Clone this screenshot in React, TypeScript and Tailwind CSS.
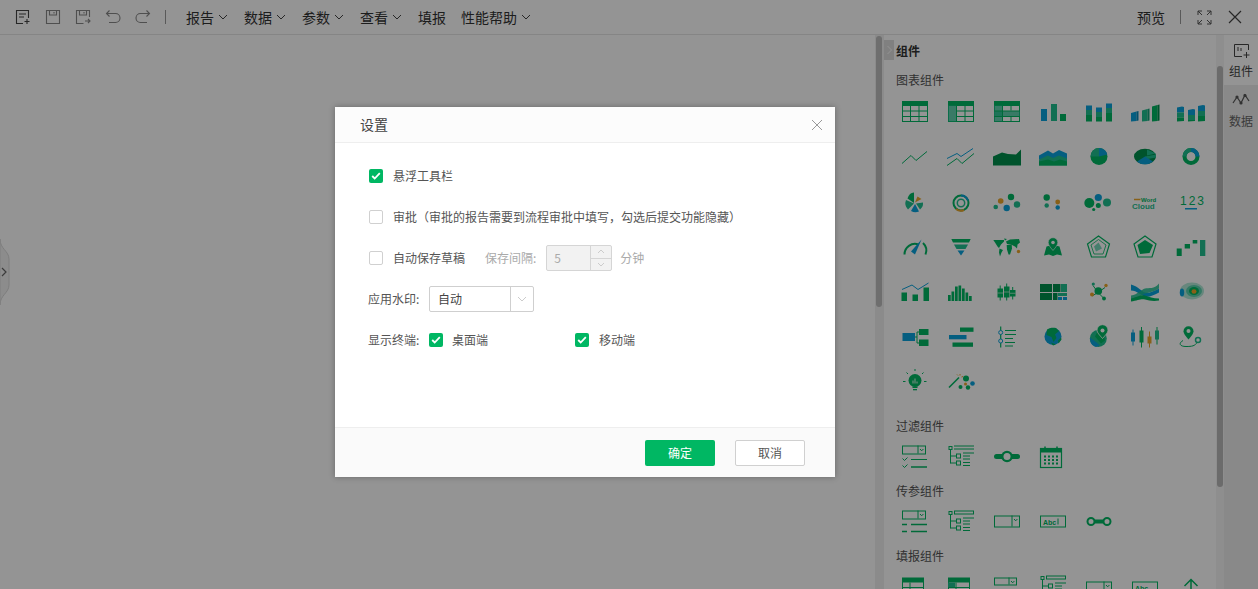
import React from "react";

const G = "#00b763";
const T = "#1fc08f";
const B = "#0aa3dc";
const O = "#eaa52a";
const D = "#008f4c";

const I = ({ children }: { children?: React.ReactNode }) => (
  <svg width={46} height={45} viewBox="0 0.5 46 45" className="block">
    {children}
  </svg>
);

const TableBase = ({ children }: { children?: React.ReactNode }) => (
  <>
    <rect x="10.5" y="12" width="25" height="20" fill="none" stroke={G} />
    <rect x="10" y="11.5" width="26" height="5" fill={G} />
    {children}
  </>
);

const Bar3D = ({ x, top, c, d }: { x: number; top: number; c: string; d: string }) => (
  <>
    <polygon points={`${x},${top + 1.5} ${x + 5.5},${top} ${x + 5.5},31.5 ${x},32`} fill={c} />
    <polygon points={`${x + 5.5},${top} ${x + 7.5},${top - 0.5} ${x + 7.5},31 ${x + 5.5},31.5`} fill={d} />
  </>
);

const Dropdown = ({ x = 10, y = 12, w = 23, h = 8 }: { x?: number; y?: number; w?: number; h?: number }) => (
  <>
    <rect x={x + 0.5} y={y + 0.5} width={w} height={h} fill="none" stroke={G} />
    <line x1={x + w - 7} x2={x + w - 7} y1={y} y2={y + h} stroke={G} />
    <path d={`M${x + w - 5} ${y + 3.5}l1.700 1.800 1.700-1.800`} fill="none" stroke={G} />
  </>
);

const Tree = ({ top }: { top?: boolean }) => (
  <>
    <rect x="11" y="13" width="3" height="3" fill="none" stroke={G} />
    <path d="M12.500 16v14M12.500 22.500h6M12.500 29.500h6" stroke={G} fill="none" />
    <rect x="18.500" y="20.500" width="4" height="4" fill="none" stroke={G} />
    <rect x="18.500" y="27.500" width="4" height="4" fill="none" stroke={G} />
    {top ? (
      <rect x="16.500" y="12.500" width="19" height="3" fill="none" stroke={G} />
    ) : (
      <path d="M16 12.500h20M16 15.500h20" stroke={G} fill="none" />
    )}
    <path d="M25 19.500h11M25 22.500h7M25 25.500h7M25 29h7M25 32h7" stroke={G} fill="none" />
  </>
);

const chart: React.ReactNode[] = [
  <TableBase>
    <path d="M10 21.500h26M10 27h26M18.500 16v16M27 16v16" stroke={G} fill="none" />
  </TableBase>,
  <TableBase>
    <rect x="10" y="16" width="8.500" height="16" fill={T} opacity="0.7" />
    <path d="M18.500 21.500h17.500M18.500 27h17.500M18.500 16v16M27 16v16" stroke={G} fill="none" />
  </TableBase>,
  <TableBase>
    <rect x="10" y="21.500" width="26" height="5.500" fill={T} opacity="0.7" />
    <rect x="10" y="16" width="8.500" height="16" fill={T} opacity="0.7" />
    <path d="M10 21.500h26M10 27h26M18.500 16v16M27 16v5M27 27v5" stroke={G} fill="none" />
  </TableBase>,
  <>
    <rect x="11" y="19.500" width="6" height="12" fill={B} />
    <rect x="21" y="14.500" width="6" height="17" fill={T} />
    <rect x="30" y="24.500" width="6" height="7" fill={G} />
  </>,
  <>
    {[
      [10, 16],
      [20, 18],
      [30, 14],
    ].map(([x, y]) => (
      <g key={x}>
        <rect x={x} y={y} width="6" height="4.500" fill={B} />
        <rect x={x} y={y + 4.500} width="6" height="5" fill={T} />
        <rect x={x} y={y + 9.500} width="6" height={22.500 - y} fill={G} />
      </g>
    ))}
  </>,
  <>
    <Bar3D x={9} top={22} c={B} d="#0889b8" />
    <Bar3D x={20} top={19.500} c={T} d="#14a379" />
    <Bar3D x={30} top={15.500} c={G} d={D} />
  </>,
  <>
    {[
      [9, 17],
      [20, 19.500],
      [30, 15.500],
    ].map(([x, y]) => (
      <g key={x}>
        <polygon points={`${x},${y + 1} ${x + 5},${y} ${x + 7},${y + 0.5} ${x + 7},${y + 6} ${x},${y + 6}`} fill={B} />
        <rect x={x} y={y + 6} width="7" height="5" fill={T} />
        <polygon points={`${x},${y + 11} ${x + 7},${y + 11} ${x + 7},31.500 ${x},32`} fill={G} />
      </g>
    ))}
  </>,

  <polyline points="10,29 19,21 24,26 35,17" fill="none" stroke={G} />,
  <>
    <polyline points="9,24 19,19 23,22 35,14" fill="none" stroke={B} />
    <polyline points="9,31 19,24 24,29 36,19" fill="none" stroke={G} />
  </>,
  <polygon points="9,22 18,18 24,19.500 32,20 37,15 37,31 9,31" fill={D} />,
  <>
    <polygon points="9,21 18,16 23,19 29,15.500 37,19 37,25 9,25" fill={B} />
    <polygon points="9,25 18,21 23,23.500 29,21 37,24 37,31 9,31" fill={T} />
    <polygon points="9,27 18,25 24,27 30,25 37,27 37,31 9,31" fill={G} />
  </>,
  <>
    <circle cx="23" cy="22" r="8.500" fill={G} />
    <path d="M23 22L14.500 22A8.500 8.500 0 0 1 23 13.500z" fill={T} />
    <path d="M23 22V13.500A8.500 8.500 0 0 1 31.300 20z" fill={B} />
  </>,
  <>
    <ellipse cx="23" cy="22" rx="11" ry="7.800" fill={D} />
    <path d="M23 22l11-2v3l-11 2z" fill={T} />
    <path d="M15 27l8-5 8 5c-3 2-5 2.800-8 2.800s-6-.8-8-2.800z" fill={B} />
    <path d="M25 15l9 4-9 2z" fill={T} />
  </>,
  <>
    <circle cx="23" cy="22" r="6.500" fill="none" stroke={G} strokeWidth="4" />
    <path d="M23 15.500a6.500 6.500 0 0 1 6.500 6.500" fill="none" stroke={B} strokeWidth="4" />
    <path d="M16.500 22a6.500 6.500 0 0 1 6.500-6.500" fill="none" stroke={T} strokeWidth="4" />
  </>,

  <>
    <path d="M22 23.500L22 13A7 10 0 0 0 15.500 19z" fill={G} />
    <path d="M23 23l2.500-6 4 2.500z" fill={O} />
    <path d="M22 24l-8-3.500A9 9 0 0 0 16 30z" fill={T} />
    <path d="M23 24.500l-4 7a9 9 0 0 0 8 .5z" fill={B} />
    <path d="M24 24l7-1a8 8 0 0 1-3 7z" fill={T} />
  </>,
  <>
    <circle cx="23" cy="23.500" r="7.500" fill="none" stroke={G} strokeWidth="2" />
    <path d="M23 16a7.500 7.500 0 0 1 7 5" fill="none" stroke={B} strokeWidth="2" />
    <path d="M18 29.500a7.500 7.500 0 0 0 8 1" fill="none" stroke={O} strokeWidth="2" />
    <circle cx="23" cy="23.500" r="3.700" fill="none" stroke={T} strokeWidth="1.500" />
  </>,
  <>
    <circle cx="11.700" cy="27.500" r="2.300" fill={T} />
    <circle cx="16.700" cy="21.500" r="2.800" fill={O} />
    <circle cx="27" cy="17.500" r="3.200" fill={G} />
    <circle cx="33" cy="25" r="3.200" fill={T} />
    <circle cx="22.700" cy="28.500" r="3.200" fill={B} />
  </>,
  <>
    <circle cx="16.700" cy="18" r="3.200" fill={G} />
    <circle cx="27.700" cy="22.500" r="2.400" fill={O} />
    <circle cx="16.700" cy="26" r="2.200" fill={T} />
    <circle cx="27.700" cy="28" r="2.200" fill={B} />
  </>,
  <>
    <circle cx="13.300" cy="23.500" r="5" fill={G} />
    <circle cx="22.300" cy="18" r="3.600" fill={B} />
    <circle cx="31" cy="23" r="4" fill={T} />
    <circle cx="22.300" cy="26" r="2.500" fill={G} />
    <circle cx="17.700" cy="30" r="1.600" fill={G} />
  </>,
  <>
    <line x1="12" x2="18.500" y1="20" y2="20" stroke={O} strokeWidth="1.500" />
    <text x="19" y="22" fontSize="6" fontWeight="700" fill={G} fontFamily="Liberation Sans, sans-serif">Word</text>
    <text x="10" y="29.500" fontSize="8" fontWeight="700" fill={T} fontFamily="Liberation Sans, sans-serif">Cloud</text>
  </>,
  <>
    <text x="12" y="25.500" fontSize="12" letterSpacing="2" fill={G} fontFamily="Liberation Sans, sans-serif">123</text>
    <rect x="17" y="28.500" width="12" height="1.500" fill={B} />
  </>,

  <>
    <path d="M12.500 30a10.500 10.500 0 0 1 14-10" fill="none" stroke={G} strokeWidth="2" />
    <path d="M31 18.500a10.500 10.500 0 0 1 2.500 11.500" fill="none" stroke={G} strokeWidth="2" />
    <polygon points="19,27 29.500,15 23,30" fill={B} />
  </>,
  <>
    <polygon points="13.300,14.500 32.700,14.500 31,18 15,18" fill={G} />
    <polygon points="16,20 30,20 27.500,24.500 18.500,24.500" fill={T} />
    <polygon points="19.500,26 26.500,26 23,31" fill={B} />
  </>,
  <>
    <polygon points="9.300,15.500 20,15.500 20,17 17,20 15,23.500 13.500,22 11,18" fill={G} />
    <polygon points="15.500,24 19,25.500 17.500,28 16,32 15,28" fill={G} />
    <polygon points="20,14 23,14.500 21,16" fill={G} />
    <polygon points="22,17 26,15 35,14.500 36,18 33.500,20 33,24 31,22 28,20.500 23,19.500" fill={G} />
    <polygon points="22.700,20.500 27.700,20.500 28,24 26,30 24.500,30 23,25" fill={G} />
    <circle cx="34.500" cy="27" r="1.700" fill={O} />
  </>,
  <>
    <path d="M14 31l2.500-9 4-1 2.500 4 2.500-4 4 1 2.500 9-5-1-4 1.500-4-1.500z" fill={G} />
    <path d="M23 26c-3-3.500-4.800-5.800-4.800-8a4.800 4.800 0 0 1 9.600 0c0 2.200-1.800 4.500-4.800 8z" fill={G} stroke="#fff" strokeWidth=".6" />
    <circle cx="23" cy="18" r="1.800" fill="#fff" />
  </>,
  <>
    <polygon points="22.500,11.500 33.500,19.500 29.500,32.500 15.500,32.500 11.500,19.500" fill="none" stroke={G} strokeWidth="1.200" />
    <polygon points="22.500,15 30,20.500 27,29.500 18,29.500 15,20.500" fill="none" stroke={G} strokeWidth=".8" />
    <polygon points="22.500,18 26,24 20,27 18,22" fill={T} opacity=".6" />
  </>,
  <>
    <polygon points="23,11.500 34,19.500 30,32.500 16,32.500 12,19.500" fill="none" stroke={G} strokeWidth="1.200" />
    <polygon points="23,15.500 31,20.500 27.500,28.500 18,29.500 15.500,20.500" fill={G} />
  </>,
  <>
    <rect x="8.700" y="24" width="5" height="7.500" fill={G} />
    <rect x="16.700" y="19.500" width="5.300" height="4.500" fill={G} />
    <rect x="24.700" y="15.500" width="4.600" height="3.500" fill={G} />
    <rect x="32" y="15.500" width="5.300" height="16" fill={T} />
  </>,

  <>
    <rect x="9.500" y="23" width="5.500" height="8.500" fill={G} />
    <rect x="20.500" y="25" width="5.500" height="6.500" fill={G} />
    <rect x="31.500" y="18" width="5.500" height="13.500" fill={G} />
    <polyline points="10,20 20,15.500 26,20 36.500,13.500" fill="none" stroke={B} />
  </>,
  <>
    {[
      [10, 25.500],
      [13.500, 22],
      [17, 17],
      [20.500, 16],
      [24, 19],
      [27.500, 23],
      [31, 26.500],
    ].map(([x, y]) => (
      <rect key={x} x={x} y={y} width="2.700" height={31.500 - y} fill={G} />
    ))}
  </>,
  <>
    {[
      [13.500, 19, 9],
      [20, 17, 11],
      [26, 20.500, 6.500],
    ].map(([x, y, h]) => (
      <g key={x}>
        <rect x={x} y={y} width="5.500" height={h} fill={G} />
        <line x1={x + 2.700} x2={x + 2.700} y1={y - 3} y2={y + h + 3} stroke={G} />
        <line x1={x} x2={x + 5.500} y1={y + h / 2} y2={y + h / 2} stroke="#fff" strokeWidth=".6" />
      </g>
    ))}
  </>,
  <>
    <rect x="10" y="14.500" width="12" height="8" fill={D} />
    <rect x="23" y="14.500" width="7.500" height="8" fill={D} />
    <rect x="31" y="14.500" width="6" height="8" fill={T} />
    <rect x="10" y="23.500" width="12" height="7" fill={D} />
    <rect x="23" y="23.500" width="4.500" height="7" fill={D} />
    <rect x="28" y="23.500" width="9" height="3" fill={T} />
    <rect x="28" y="27.500" width="4" height="3" fill={B} />
    <rect x="33" y="27.500" width="4" height="3" fill={B} />
  </>,
  <>
    <path d="M22 23l-5-7M22 23l7-5M22 23l-6 3.500M22 23l6 6" stroke={G} fill="none" />
    <circle cx="22.300" cy="21.500" r="3.800" fill={G} />
    <circle cx="17.300" cy="14.500" r="1.600" fill={T} />
    <circle cx="30" cy="16" r="1.700" fill={O} />
    <circle cx="16" cy="25" r="2" fill={O} />
    <circle cx="28" cy="29" r="1.900" fill={G} />
  </>,
  <>
    <path d="M9 15c8 2 10 7 14 8s8-1 14-4v4c-6 3-10 5-14 4S15 21 9 21z" fill={B} />
    <path d="M9 26c7-1 10-6 14-7s9 1 14-5v5c-5 3-10 4-14 5s-6 6-14 7z" fill={T} opacity=".85" />
    <path d="M9 29c8-2 10-4 14-3s8 3 14 3v2c-6 1-10 0-14-1s-7 1-14 2z" fill={G} />
  </>,
  <>
    <ellipse cx="24" cy="21.500" rx="12" ry="8.500" fill={T} opacity=".35" />
    <ellipse cx="26" cy="21.500" rx="8" ry="6" fill={T} opacity=".6" />
    <ellipse cx="26" cy="21.500" rx="5" ry="4" fill={G} />
    <ellipse cx="26" cy="22" rx="2.500" ry="2.200" fill={O} />
    <ellipse cx="14" cy="23" rx="2.200" ry="4" fill={B} />
  </>,

  <>
    <rect x="10.500" y="18.500" width="12.500" height="8" fill={B} />
    <rect x="27" y="14.500" width="9.500" height="6" fill={G} />
    <rect x="27" y="25" width="9.500" height="6.500" fill={G} />
    <path d="M23 22.500h2M25 17.500v11M25 17.500h2M25 28.500h2" stroke={G} fill="none" />
  </>,
  <>
    <rect x="22" y="13" width="13.500" height="4.300" fill={G} />
    <rect x="11" y="20.500" width="17.500" height="4.300" fill={B} />
    <rect x="14.500" y="28" width="20.500" height="4.300" fill={G} />
  </>,
  <>
    <line x1="16.700" x2="16.700" y1="12" y2="33" stroke={G} strokeWidth="1.200" />
    <circle cx="16.700" cy="18" r="2" fill="#fff" stroke={B} />
    <circle cx="16.700" cy="26.500" r="2" fill="#fff" stroke={B} />
    <path d="M21 16h11M21 20h11M21 24h8M21 28h10M21 31.500h8" stroke={G} strokeWidth="1.200" fill="none" />
  </>,
  <>
    <circle cx="23" cy="22" r="8.500" fill={B} />
    <path d="M17 15c3-2 6-2 9-1.500l3 3-4 3.500 1.500 3.500-3 4-2-5-5-2zM21 28l5 2-3 1zM28 26l3-3 .5 2-3 4z" fill={G} />
  </>,
  <>
    <circle cx="22.300" cy="24" r="8.500" fill={T} />
    <path d="M14 23c4 3 6 4 10 8l-4 1.500c-4-1-6-4-6-9.500z" fill={B} />
    <path d="M22 16c2-1 4 0 5 2l2 8-4 3-6-7z" fill={G} />
    <path d="M26.500 24c-3-3.500-5.500-5.800-5.500-8.300a5.500 5.500 0 0 1 11 0c0 2.500-2.500 4.800-5.500 8.300z" fill={G} stroke="#fff" strokeWidth=".8" />
    <circle cx="26.500" cy="16" r="2" fill="#fff" />
  </>,
  <>
    <line x1="11" x2="11" y1="15" y2="31" stroke={B} />
    <rect x="9" y="18" width="4" height="9" fill={B} />
    <line x1="19.500" x2="19.500" y1="12.500" y2="33" stroke={G} />
    <rect x="17.500" y="16" width="4" height="12" fill={G} />
    <line x1="27.500" x2="27.500" y1="17" y2="33" stroke={O} />
    <rect x="25.500" y="22" width="4" height="7" fill={O} />
    <line x1="35" x2="35" y1="12.500" y2="30" stroke={G} />
    <rect x="33" y="16" width="4" height="9" fill={T} />
  </>,
  <>
    <path d="M20.500 25c-3-3.500-5-6-5-8.300a5 5 0 0 1 10 0c0 2.300-2 4.800-5 8.300z" fill={G} />
    <circle cx="20.500" cy="16.500" r="2" fill="#fff" />
    <circle cx="30" cy="25.500" r="2.500" fill="none" stroke={T} strokeWidth="1.500" />
    <path d="M15 26c-5 3-3 6 3 6s9-.5 11-4" fill="none" stroke={G} />
  </>,

  <>
    <circle cx="23" cy="21" r="6.500" fill={G} />
    <path d="M21 24v-3M23 24v-5M25 24v-2" stroke="#fff" strokeWidth=".9" />
    <rect x="20.500" y="27" width="5" height="1.500" fill={G} />
    <rect x="21" y="29.500" width="4" height="1.300" fill={G} />
    <path d="M13.500 22h-2.500M34.500 22h-2.500M16 14.500l-1.500-1.500M30 14.500l1.500-1.500M23 11.500v-2" stroke={G} />
  </>,
  <>
    <line x1="11" x2="21" y1="28" y2="18" stroke={G} strokeWidth="1.600" />
    <path d="M19 15l1 1M22 14.500v1.500M25 17l-1.500.5" stroke={O} />
    <circle cx="28" cy="19" r="3" fill={G} />
    <circle cx="22.500" cy="27.500" r="2" fill={G} />
    <circle cx="27.500" cy="24.500" r="1.500" fill={O} />
    <circle cx="30" cy="28" r="2.200" fill={G} />
    <circle cx="34.500" cy="24" r="2.300" fill={B} />
  </>,
];

const Cal = () => (
  <>
    <rect x="10.500" y="15" width="21" height="19" fill="none" stroke={G} strokeWidth="1.200" />
    <rect x="10.500" y="15" width="21" height="4" fill={G} />
    <path d="M15 13v4M27 13v4" stroke={G} strokeWidth="1.500" />
    {[22, 25.500, 29].map((y) =>
      [14, 18, 22, 26].map((x) => <rect key={x + "-" + y} x={x} y={y} width="2" height="2" fill={G} />),
    )}
  </>
);

const filters: React.ReactNode[] = [
  <>
    <Dropdown />
    <path d="M10.500 25l2 2 3-3M10.500 32l2 2 3-3" fill="none" stroke={G} />
    <path d="M19 26h16" stroke={G} />
    <path d="M19 33.500h16" stroke={G} strokeWidth="1.500" />
  </>,
  <Tree />,
  <>
    <rect x="10" y="20.500" width="26" height="5" rx="2.500" fill={G} />
    <circle cx="23" cy="23" r="5.800" fill={G} />
    <circle cx="23" cy="23" r="3.500" fill="#fff" />
  </>,
  <Cal />,
];

const params: React.ReactNode[] = [
  <>
    <Dropdown />
    <path d="M10 26h5M19 26h16M10 33h5M19 33h16" stroke={G} strokeWidth="1.300" />
  </>,
  <Tree top />,
  <Dropdown x={10} y={17} w={25} h={11} />,
  <>
    <rect x="10.500" y="17.500" width="25" height="11" fill="none" stroke={G} />
    <text x="13" y="26" fontSize="7" fontWeight="700" fill={G} fontFamily="Liberation Sans, sans-serif">Abc</text>
    <line x1="28" x2="28" y1="20" y2="26" stroke={G} />
  </>,
  <>
    <rect x="14" y="21" width="18" height="4" fill={G} />
    <circle cx="15" cy="23" r="3.500" fill="#fff" stroke={G} strokeWidth="2" />
    <circle cx="31" cy="23" r="3.500" fill="#fff" stroke={G} strokeWidth="2" />
  </>,
];

const fills: React.ReactNode[] = [
  <>
    <rect x="10.500" y="15" width="21" height="18" fill="none" stroke={G} />
    <rect x="10" y="14" width="22" height="5" fill={G} />
    <path d="M10 24h22M18 19v14" stroke={G} />
  </>,
  <>
    <rect x="10.500" y="15" width="21" height="18" fill="none" stroke={G} />
    <rect x="10" y="14" width="22" height="5" fill={G} />
    <rect x="10" y="19" width="7" height="5" fill={T} />
    <path d="M10 24h22M18 19v14" stroke={G} />
  </>,
  <Dropdown x={10} y={14} w={22} h={7} />,
  <Tree top />,
  <Dropdown x={10} y={18} w={25} h={11} />,
  <>
    <rect x="10.500" y="18.500" width="25" height="11" fill="none" stroke={G} />
    <text x="13" y="27" fontSize="7" fontWeight="700" fill={G} fontFamily="Liberation Sans, sans-serif">Abc</text>
  </>,
  <path d="M23 32V16M16.500 22.500L23 16l6.500 6.500" fill="none" stroke={G} strokeWidth="1.500" />,
];

const Grid = ({ items }: { items: React.ReactNode[] }) => (
  <div className="grid grid-cols-[repeat(7,46px)] auto-rows-[45px]">
    {items.map((it, i) => (
      <I key={i}>{it}</I>
    ))}
  </div>
);

const Chev = () => (
  <svg width="10" height="6" viewBox="0 0 10 6" className="ml-1 block">
    <path d="M1 1l4 4 4-4" fill="none" stroke="#444" strokeWidth="1" />
  </svg>
);

const Menu = ({ label, arrow = true }: { label: string; arrow?: boolean }) => (
  <div className="flex items-center text-[14px] text-[#333]">
    {label}
    {arrow && <Chev />}
  </div>
);

const ToolIcon = ({ children, on }: { children: React.ReactNode; on?: boolean }) => (
  <svg width="16" height="16" viewBox="0 0 16 16" fill="none" stroke={on ? "#444" : "#888"} strokeWidth="1.100" className="block">
    {children}
  </svg>
);

const Check = ({ on }: { on?: boolean }) =>
  on ? (
    <span className="flex h-[14px] w-[14px] shrink-0 items-center justify-center rounded-[2px] bg-[#00b763]">
      <svg width="10" height="8" viewBox="0 0 10 8">
        <path d="M1.200 4l2.500 2.500L8.800 1.200" fill="none" stroke="#fff" strokeWidth="1.800" />
      </svg>
    </span>
  ) : (
    <span className="block h-[14px] w-[14px] shrink-0 rounded-[2px] border border-[#d0d0d0] bg-white" />
  );

export default function App() {
  return (
    <div className="relative flex h-[589px] w-[1258px] flex-col overflow-hidden bg-white font-['Noto_Sans_CJK_SC','Liberation_Sans',sans-serif] text-[12px] text-[#555]">
      <header className="flex h-[35px] shrink-0 items-center border-b border-[#e6e6e6] pr-[16px] pl-[15px]">
        <div className="flex items-center gap-[14px]">
          <ToolIcon on>
            <path d="M13.500 9V1.500h-12v13H8" />
            <path d="M4 5h7M4 8h5M9.500 12.500h5M12 10v5" />
          </ToolIcon>
          <ToolIcon>
            <path d="M1.500 1.500h13v13h-13z" />
            <path d="M4.500 1.500v4.500h7V1.500M9 3v1.500" />
          </ToolIcon>
          <ToolIcon>
            <path d="M14.500 8V1.500h-13v13h7" />
            <path d="M4.500 1.500v4.500h7V1.500M9 3v1.500M10 12h5M13 10l2 2-2 2" />
          </ToolIcon>
          <ToolIcon>
            <path d="M4.500 1.500L1.500 4.500l3 3M1.500 4.500h9a4 4 0 0 1 0 9H4" />
          </ToolIcon>
          <ToolIcon>
            <path d="M11.500 1.500l3 3-3 3M14.500 4.500h-9a4 4 0 0 0 0 9H12" />
          </ToolIcon>
        </div>
        <div className="mr-[20px] ml-[14px] h-[14px] w-px bg-[#999]" />
        <div className="flex items-center gap-[16px]">
          <Menu label="报告" />
          <Menu label="数据" />
          <Menu label="参数" />
          <Menu label="查看" />
          <Menu label="填报" arrow={false} />
          <div className="-ml-[1px]">
            <Menu label="性能帮助" />
          </div>
        </div>
        <div className="ml-auto flex items-center">
          <span className="text-[14px] text-[#333]">预览</span>
          <div className="mr-[16px] ml-[15px] h-[14px] w-px bg-[#999]" />
          <svg width="15" height="15" viewBox="0 0 15 15" fill="none" stroke="#555" className="block">
            <path d="M1 5V1h4M1 1l4 4M10 1h4v4M14 1l-4 4M1 10v4h4M1 14l4-4M14 10v4h-4M14 14l-4-4" />
          </svg>
          <svg width="14" height="14" viewBox="0 0 14 14" fill="none" stroke="#444" strokeWidth="1.200" className="ml-[16px] block">
            <path d="M1 1l12 12M13 1L1 13" />
          </svg>
        </div>
      </header>

      <div className="relative flex min-h-0 flex-1">
        <main className="relative w-[875px] shrink-0 bg-white">
          <div className="absolute top-[204px] left-0 flex h-[66px] w-[10px] items-center justify-center">
            <svg width="10" height="66" viewBox="0 0 10 66" className="absolute inset-0">
              <path d="M0 0c0 10 9 12 9 20v26c0 8-9 10-9 20z" fill="#f2f2f2" stroke="#d8d8d8" />
            </svg>
            <svg width="6" height="10" viewBox="0 0 6 10" className="relative -left-[1px]">
              <path d="M1 1l4 4-4 4" fill="none" stroke="#666" strokeWidth="1.200" />
            </svg>
          </div>
        </main>

        <div className="w-[9px] shrink-0 bg-[#f0f0f0]">
          <div className="mt-[1px] ml-[1px] h-[271px] w-[6px] rounded-[3px] bg-[#bdbdbd]" />
        </div>

        <aside className="relative w-[332px] shrink-0 overflow-hidden bg-white">
          <div className="absolute top-[5px] left-0 flex h-[20px] w-[10px] items-center justify-center bg-[#dcdcdc]">
            <svg width="5" height="10" viewBox="0 0 5 10">
              <path d="M0.500 1l4 4-4 4" fill="none" stroke="#fff" />
            </svg>
          </div>
          <div className="pt-[7px] pl-[12px] text-[12px] leading-[18px] font-bold text-[#333]">组件</div>
          <div className="mt-[11px] pl-[12px] leading-[18px]">图表组件</div>
          <div className="mt-[1px] pl-[8px]">
            <Grid items={chart} />
          </div>
          <div className="mt-[12px] pl-[12px] leading-[17px]">过滤组件</div>
          <div className="pl-[8px]">
            <Grid items={filters} />
          </div>
          <div className="mt-[3px] pl-[12px] leading-[17px]">传参组件</div>
          <div className="pl-[8px]">
            <Grid items={params} />
          </div>
          <div className="mt-[3px] pl-[12px] leading-[17px]">填报组件</div>
          <div className="pl-[8px]">
            <Grid items={fills} />
          </div>
        </aside>

        <div className="w-[8px] shrink-0 bg-[#f4f4f4]">
          <div className="mt-[31px] ml-[1px] h-[421px] w-[6px] rounded-[3px] bg-[#b8b8b8]" />
        </div>

        <nav className="flex min-w-0 flex-1 flex-col">
          <div className="flex h-[50px] flex-col items-center bg-white pt-[8px]">
            <svg width="17" height="16" viewBox="0 0 17 16" fill="none" stroke="#444" className="block">
              <path d="M15.500 7V1.500h-14v12H9" />
              <path d="M5 4v4M8 5v3M10.500 12h6M13.500 9v6" />
            </svg>
            <span className="mt-[3px] leading-[18px] text-[#444]">组件</span>
          </div>
          <div className="flex flex-1 flex-col items-center bg-[#ececec] pt-[8px]">
            <svg width="18" height="14" viewBox="0 0 18 14" fill="none" stroke="#555" strokeWidth="1.200" className="block">
              <path d="M1 10l4-6 4 6 4-8 4 6" />
              <circle cx="5" cy="4" r="1" fill="#555" />
              <circle cx="9" cy="10" r="1" fill="#555" />
              <circle cx="13" cy="2.500" r="1" fill="#555" />
            </svg>
            <span className="mt-[5px] leading-[18px] text-[#666]">数据</span>
          </div>
        </nav>
      </div>

      <div className="absolute inset-0 bg-black/[0.42]" />

      <section className="absolute top-[107px] left-[335px] flex h-[370px] w-[500px] flex-col bg-white shadow-[0_0_6px_rgba(0,0,0,0.3)]">
        <div className="flex h-[36px] shrink-0 items-center justify-between border-b border-[#eeeeee] bg-[#fcfcfc] pr-[12px] pl-[25px]">
          <span className="text-[14px] text-[#444]">设置</span>
          <svg width="12" height="12" viewBox="0 0 12 12" fill="none" stroke="#999">
            <path d="M1 1l10 10M11 1L1 11" />
          </svg>
        </div>
        <div className="flex min-h-0 flex-1 flex-col pl-[33px] text-[#555]">
          <label className="mt-[26px] flex h-[14px] items-center gap-[10px] pl-[1px]">
            <Check on />
            <span>悬浮工具栏</span>
          </label>
          <label className="mt-[27px] flex h-[14px] items-center gap-[10px] pl-[1px]">
            <Check />
            <span>审批（审批的报告需要到流程审批中填写，勾选后提交功能隐藏）</span>
          </label>
          <div className="mt-[27px] flex h-[14px] items-center pl-[1px]">
            <Check />
            <span className="ml-[10px]">自动保存草稿</span>
            <span className="ml-[20px] text-[#aaa]">保存间隔:</span>
            <div className="ml-[10px] flex h-[26px] w-[66px] rounded-[2px] border border-[#d5d5d5] bg-[#f2f2f2]">
              <span className="flex-1 pl-[7px] leading-[24px] text-[#aaa]">5</span>
              <div className="flex w-[21px] flex-col border-l border-[#d5d5d5]">
                <span className="flex flex-1 items-center justify-center border-b border-[#d5d5d5]">
                  <svg width="8" height="5" viewBox="0 0 8 5"><path d="M1 4l3-3 3 3" fill="none" stroke="#ccc" /></svg>
                </span>
                <span className="flex flex-1 items-center justify-center">
                  <svg width="8" height="5" viewBox="0 0 8 5"><path d="M1 1l3 3 3-3" fill="none" stroke="#ccc" /></svg>
                </span>
              </div>
            </div>
            <span className="ml-[8px] text-[#aaa]">分钟</span>
          </div>
          <div className="mt-[21px] flex h-[26px] items-center">
            <span className="w-[61px]">应用水印:</span>
            <div className="flex h-[26px] w-[105px] rounded-[2px] border border-[#cfcfcf] bg-white">
              <span className="flex-1 pl-[8px] leading-[24px] text-[#444]">自动</span>
              <span className="flex w-[23px] items-center justify-center border-l border-[#cfcfcf]">
                <svg width="10" height="6" viewBox="0 0 10 6"><path d="M1 1l4 4 4-4" fill="none" stroke="#ccc" /></svg>
              </span>
            </div>
          </div>
          <div className="mt-[21px] flex h-[14px] items-center">
            <span className="w-[61px]">显示终端:</span>
            <Check on />
            <span className="ml-[9px] w-[123px]">桌面端</span>
            <Check on />
            <span className="ml-[10px]">移动端</span>
          </div>
        </div>
        <div className="flex h-[50px] shrink-0 items-start justify-end gap-[20px] border-t border-[#eeeeee] bg-[#fafafa] pt-[12px] pr-[30px]">
          <button className="h-[26px] w-[70px] rounded-[2px] bg-[#00b763] text-[12px] text-white">确定</button>
          <button className="h-[26px] w-[70px] rounded-[2px] border border-[#d0d0d0] bg-white text-[12px] text-[#555]">取消</button>
        </div>
      </section>
    </div>
  );
}
